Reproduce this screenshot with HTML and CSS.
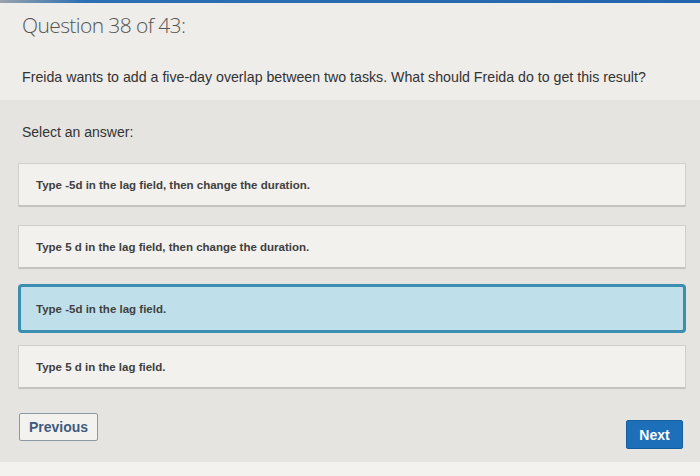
FILE: index.html
```html
<!DOCTYPE html>
<html lang="en">
<head>
    <meta charset="UTF-8">
    <title>Question 38 of 43</title>
    <link rel="stylesheet" href="styles.css">
</head>
<body>
    <div class="topbar"></div>
    <div class="header">
        <h1>Question 38 of 43:</h1>
        <p class="prompt">Freida wants to add a five-day overlap between two tasks. What should Freida do to get this result?</p>
    </div>

    <div class="answers">
        <div class="label">Select an answer:</div>
        <div class="option first">Type -5d in the lag field, then change the duration.</div>
        <div class="option">Type 5 d in the lag field, then change the duration.</div>
        <div class="option selected">Type -5d in the lag field.</div>
        <div class="option">Type 5 d in the lag field.</div>

        <div class="nav">
            <button class="btn-prev">Previous</button>
            <button class="btn-next">Next</button>
        </div>
    </div>
    <div class="footer"></div>
</body>
</html>
```

FILE: styles.css
```css
body {
    margin: 0;
    font-family: "Liberation Sans", Arial, sans-serif;
    background: #e6e4e0;
    color: #333;
}

.topbar {
    height: 3px;
    background: linear-gradient(to right, #9aa3ad, #2b6fb4 12%, #2466ad);
}

.header {
    background: #eeedea;
    padding: 8px 22px 0;
    height: 89px;
}

h1 {
    margin: 0;
    font-family: "Open Sans", sans-serif;
    font-weight: 300;
    font-size: 21px;
    color: #555;
    letter-spacing: -0.6px;
}

.prompt {
    margin: 30px 0 0;
    font-size: 14.2px;
    color: #333;
}

.answers {
    padding: 24px 14px 0 18px;
    height: 338px;
}

.label {
    font-size: 14px;
    padding-left: 4px;
    margin-bottom: 23px;
}

.option {
    background: #f2f1ee;
    border: 1px solid #d0cec9;
    border-bottom: 2px solid #c7c4bf;
    box-sizing: border-box;
    height: 44px;
    display: flex;
    align-items: center;
    padding-left: 17px;
    font-size: 11.5px;
    font-weight: bold;
    color: #404040;
    margin-bottom: 17px;
}

.option.first {
    margin-bottom: 18px;
}

.option.selected {
    background: #bfe0ea;
    border: 3px solid #3b8eaf;
    border-radius: 4px;
    height: 49px;
    padding-left: 15px;
    margin-top: -2px;
    margin-bottom: 12px;
}

.nav {
    display: flex;
    justify-content: space-between;
    align-items: flex-start;
    margin-top: 24px;
    padding: 0 3px 0 1px;
}

.btn-prev {
    font-family: inherit;
    font-size: 14px;
    font-weight: bold;
    color: #3f5a7e;
    background: #f3f2ef;
    border: 1px solid #8d98a6;
    border-radius: 2px;
    width: 79px;
    height: 28px;
}

.btn-next {
    font-family: inherit;
    font-size: 14px;
    font-weight: bold;
    color: #fff;
    background: #1d6fba;
    border: 1px solid #155d9e;
    border-radius: 2px;
    width: 57px;
    height: 29px;
    margin-top: 7px;
}

.footer {
    background: #f3f2ef;
    height: 20px;
}
```
